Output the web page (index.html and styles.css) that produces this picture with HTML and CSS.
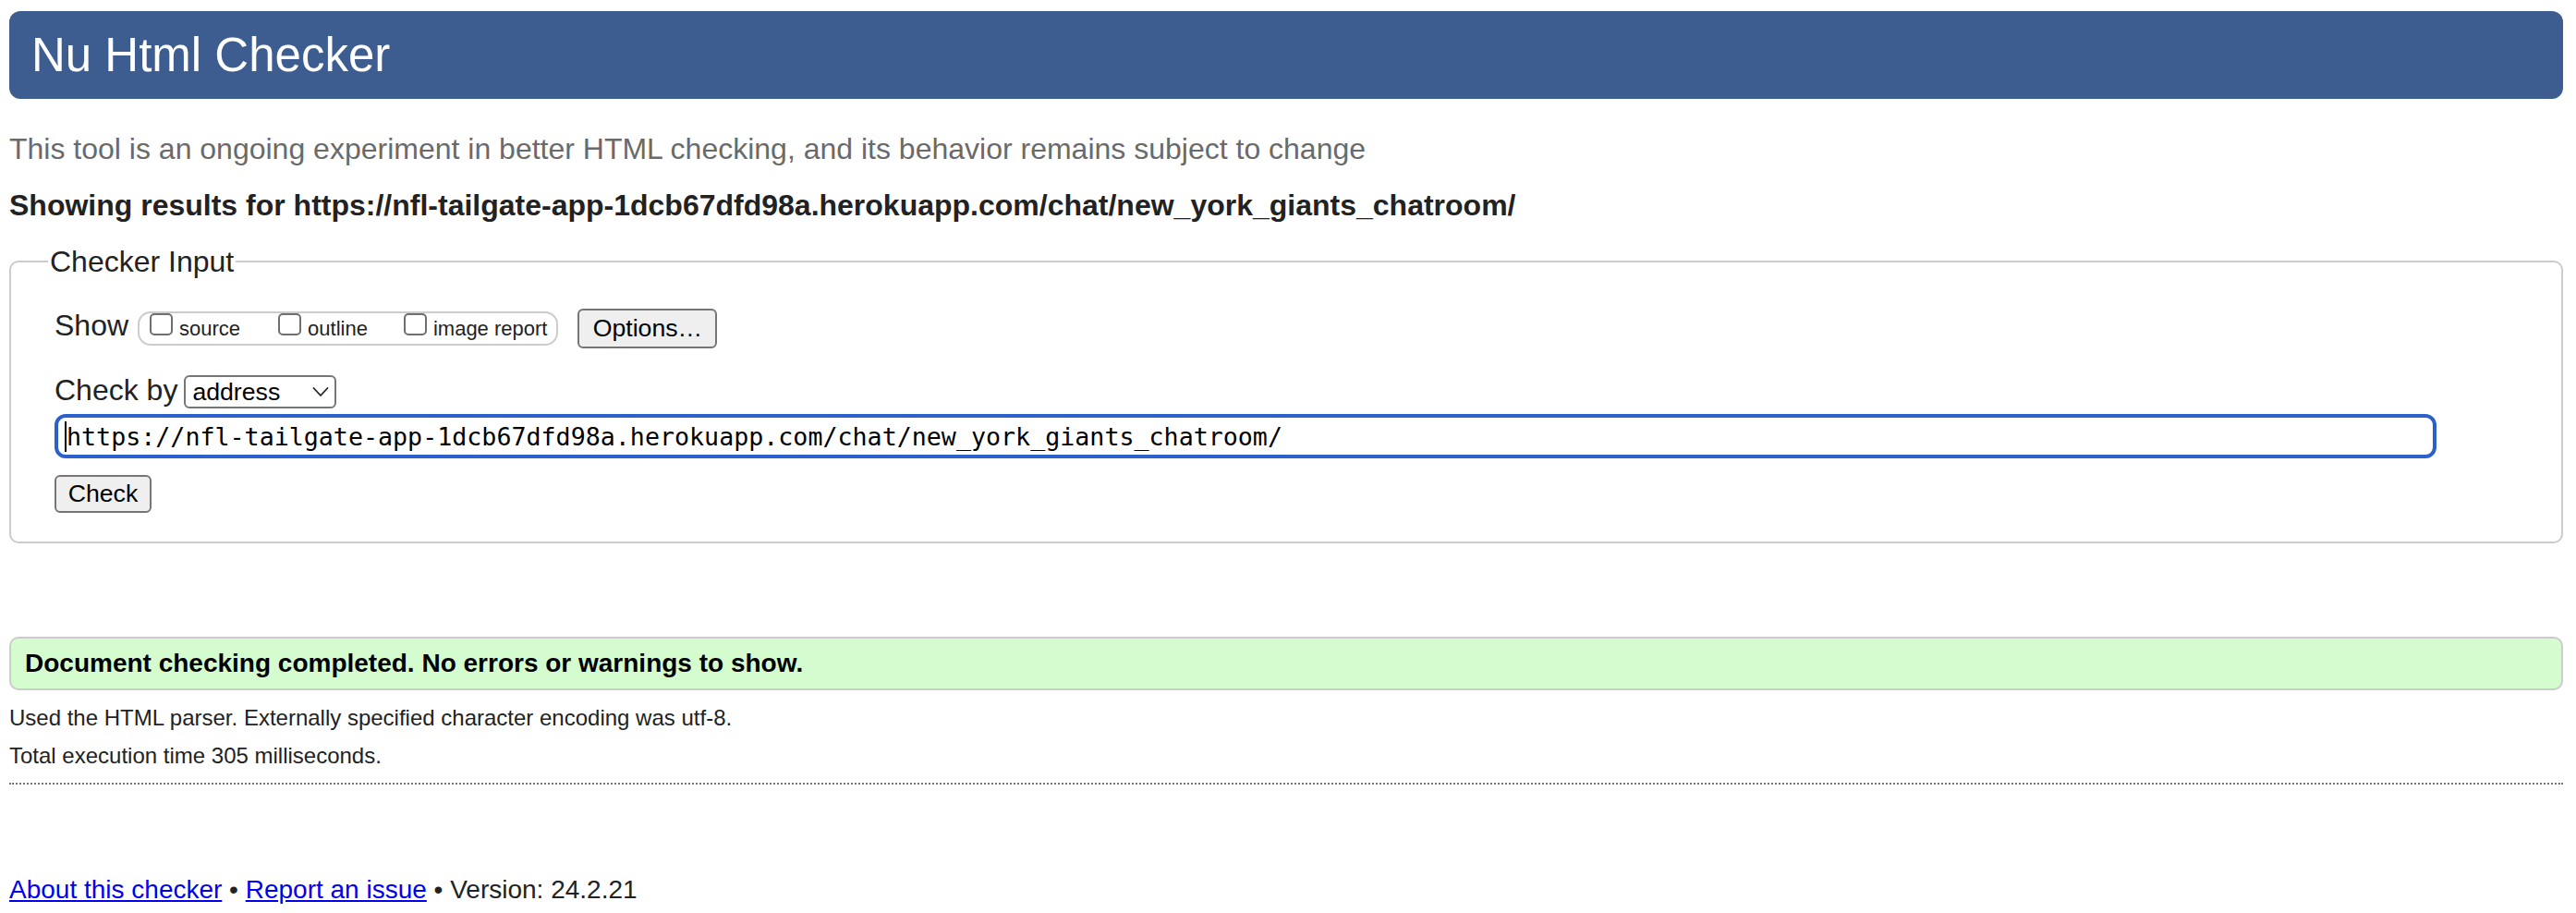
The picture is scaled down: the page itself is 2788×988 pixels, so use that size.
FILE: index.html
```html
<!DOCTYPE html>
<html lang="en">
<head>
<meta charset="utf-8">
<title>Showing results for https://nfl-tailgate-app-1dcb67dfd98a.herokuapp.com/chat/new_york_giants_chatroom/ - Nu Html Checker</title>
<link rel="stylesheet" href="styles.css">
</head>
<body>
<h1 class="title">Nu Html Checker</h1>
<p class="intro">This tool is an ongoing experiment in better HTML checking, and its behavior remains subject to change</p>
<p class="showing">Showing results for https://nfl-tailgate-app-1dcb67dfd98a.herokuapp.com/chat/new_york_giants_chatroom/</p>
<form class="checker">
  <fieldset class="input-set">
    <legend class="legend">Checker Input</legend>
    <div class="row row-show">
      <span class="label label-show">Show</span>
      <span class="pill">
        <label class="opt opt-source"><input type="checkbox" class="cb"><span class="opt-text">source</span></label>
        <label class="opt opt-outline"><input type="checkbox" class="cb"><span class="opt-text">outline</span></label>
        <label class="opt opt-image"><input type="checkbox" class="cb"><span class="opt-text">image report</span></label>
      </span>
      <button type="button" class="btn btn-options">Options…</button>
    </div>
    <div class="row row-by">
      <span class="label label-by">Check by</span>
      <span class="select-wrap">
        <select class="select"><option>address</option><option>file upload</option><option>text input</option></select>
        <svg class="chevron" width="18" height="12" viewBox="0 0 18 12"><path d="M1.5 2 L9 10 L16.5 2" fill="none" stroke="#222" stroke-width="1.8" stroke-linecap="round" stroke-linejoin="round"/></svg>
      </span>
    </div>
    <div class="row row-url">
      <span class="url-wrap"><input class="url" type="text" value="https://nfl-tailgate-app-1dcb67dfd98a.herokuapp.com/chat/new_york_giants_chatroom/"></span>
    </div>
    <div class="row row-check">
      <button type="button" class="btn btn-check">Check</button>
    </div>
  </fieldset>
</form>
<div class="success">Document checking completed. No errors or warnings to show.</div>
<p class="meta meta-parser">Used the HTML parser. Externally specified character encoding was utf-8.</p>
<p class="meta meta-time">Total execution time 305 milliseconds.</p>
<hr class="sep">
<p class="footer"><a class="link" href="#about">About this checker</a> • <a class="link" href="#issue">Report an issue</a> • Version: 24.2.21</p>
</body>
</html>
```

FILE: styles.css
```css
html, body {
  background: #fff;
}
body {
  margin: 0;
  padding: 12px 14px 0 10px;
  font-family: "Liberation Sans", Arial, Helvetica, sans-serif;
  color: #222;
}
.title {
  margin: 0;
  height: 95px;
  padding: 0 24px;
  line-height: 95px;
  font-size: 51px;
  font-weight: normal;
  color: #fff;
  background: #3d5c8f;
  border-radius: 12px;
}
.intro {
  margin: 34px 0 0;
  font-size: 32px;
  line-height: 40px;
  color: #6a6a6a;
}
.showing {
  margin: 21px 0 0;
  font-size: 32px;
  line-height: 40px;
  font-weight: bold;
  color: #222;
}
.checker {
  margin: 21px 0 0;
}
.input-set {
  margin: 0;
  padding: 0 12px 31px 40px;
  border: 2px solid #cccccc;
  border-radius: 10px;
  min-width: 0;
}
.legend {
  padding: 0 2px;
  font-size: 32px;
  line-height: 40px;
  color: #222;
}
.row {
  display: flex;
  align-items: center;
  margin-left: 7px;
}
.label {
  font-size: 32px;
  line-height: 40px;
  color: #222;
}
.row-show {
  margin-top: 31px;
  height: 43px;
}
.label-show {
  margin-bottom: 7px;
  margin-right: 10px;
}
.pill {
  display: flex;
  align-items: flex-start;
  box-sizing: border-box;
  height: 37px;
  padding: 0 10px 0 11px;
  border: 2px solid #cccccc;
  border-radius: 14px;
}
.opt {
  display: flex;
  align-items: flex-end;
  font-size: 22px;
  color: #222;
}
.opt-outline {
  margin-left: 41px;
}
.opt-image {
  margin-left: 39px;
}
.cb {
  -webkit-appearance: none;
  appearance: none;
  box-sizing: border-box;
  width: 25px;
  height: 24px;
  margin: 0;
  border: 2px solid #6f6f6f;
  border-radius: 5px;
  background: #fff;
}
.opt-text {
  line-height: 24px;
  margin-left: 7px;
  margin-bottom: -5px;
}
.btn {
  box-sizing: border-box;
  padding: 0;
  font-family: "Liberation Sans", Arial, Helvetica, sans-serif;
  font-size: 26.67px;
  color: #000;
  background: #efefef;
  border: 2px solid #767676;
  border-radius: 6px;
}
.btn-options {
  width: 151px;
  height: 43px;
  margin-left: 21px;
}
.row-by {
  margin-top: 29px;
  height: 36px;
}
.label-by {
  margin-bottom: 4px;
  margin-right: 7px;
}
.select-wrap {
  position: relative;
  display: block;
  height: 36px;
}
.select {
  -webkit-appearance: none;
  appearance: none;
  box-sizing: border-box;
  width: 165px;
  height: 36px;
  margin: 0;
  padding: 0 0 0 7px;
  font-family: "Liberation Sans", Arial, Helvetica, sans-serif;
  font-size: 26.67px;
  color: #000;
  background: #fff;
  border: 2px solid #767676;
  border-radius: 6px;
}
.chevron {
  position: absolute;
  left: 139px;
  top: 12px;
}
.row-url {
  margin-top: 6px;
  height: 48px;
}
.url-wrap {
  position: relative;
  display: block;
}
.url-wrap::before {
  content: "";
  position: absolute;
  left: 11px;
  top: 8px;
  width: 2px;
  height: 33px;
  background: #000;
}
.url {
  box-sizing: border-box;
  display: block;
  width: 2578px;
  height: 48px;
  margin: 0;
  padding: 0 0 0 9px;
  font-family: "DejaVu Sans Mono", "Liberation Mono", monospace;
  font-size: 26.67px;
  color: #000;
  background: #fff;
  border: 4px solid #2b61cc;
  border-radius: 12px;
  outline: none;
  caret-color: transparent;
}
.row-check {
  margin-top: 18px;
  height: 41px;
}
.btn-check {
  width: 105px;
  height: 41px;
}
.success {
  margin: 101px 0 0;
  box-sizing: border-box;
  height: 58px;
  padding: 0 15px;
  line-height: 54px;
  font-size: 28px;
  font-weight: bold;
  color: #000;
  background: #d5fccf;
  border: 2px solid #cccccc;
  border-radius: 10px;
}
.meta {
  margin: 15px 0 0;
  font-size: 24px;
  line-height: 30px;
  color: #222;
}
.meta-time {
  margin-top: 11px;
}
.sep {
  margin: 14px 0 0;
  height: 0;
  border: 0;
  border-top: 2px dotted #777;
}
.footer {
  margin: 97px 0 0;
  font-size: 28px;
  line-height: 34px;
  color: #222;
}
.link {
  color: #0000ee;
  text-decoration: underline;
}
```
